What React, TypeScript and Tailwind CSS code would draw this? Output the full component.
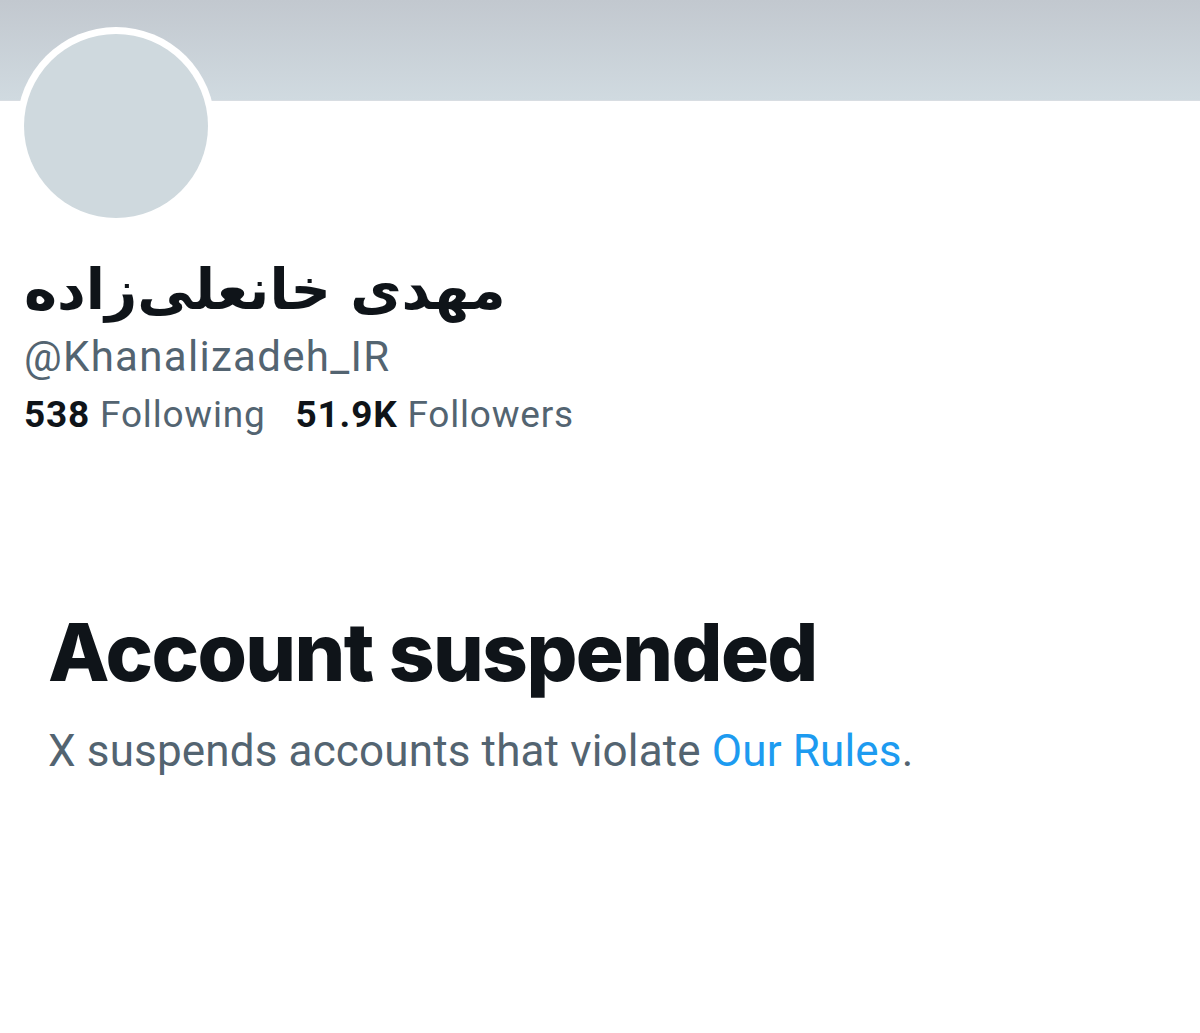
import React from 'react';

const App: React.FC = () => {
  return (
    <div className="min-h-screen w-[1200px] h-[1033px] bg-white overflow-hidden font-['Roboto',sans-serif]">
      <div className="relative h-[101px] bg-gradient-to-b from-[#c2c8cf] to-[#d0dae0] border-b border-[#d8dde2]">
        <div className="absolute left-[17px] top-[27px] w-[198px] h-[198px] rounded-full bg-white p-[7px]">
          <div className="w-full h-full rounded-full bg-[#cfd9de]" />
        </div>
      </div>

      <div className="pl-[24px] pt-[157px]">
        <h1
          dir="rtl"
          className="inline-block text-[56px] leading-[64px] font-bold text-[#0f1419] font-['DejaVu_Sans',sans-serif]"
        >
          مهدی خانعلی‌زاده
        </h1>
        <div className="mt-[11px] text-[42px] leading-[48px] tracking-[1.3px] text-[#536471]">@Khanalizadeh_IR</div>
        <div className="mt-[12px] flex gap-[30px] text-[37px] leading-[44px] tracking-[0.8px]">
          <span>
            <span className="font-bold text-[#0f1419]">538</span>
            <span className="text-[#536471]"> Following</span>
          </span>
          <span>
            <span className="font-bold text-[#0f1419]">51.9K</span>
            <span className="text-[#536471]"> Followers</span>
          </span>
        </div>
      </div>

      <div className="pl-[48px] pt-[167px]">
        <h2 className="text-[80px] leading-[96px] font-extrabold tracking-[-1.6px] text-[#0f1419] font-['Inter',sans-serif]">
          Account suspended
        </h2>
        <p className="mt-[25px] text-[44px] leading-[52px] tracking-[0.15px] text-[#536471]">
          X suspends accounts that violate <span className="text-[#1d9bf0]">Our Rules</span>.
        </p>
      </div>
    </div>
  );
};

export default App;
